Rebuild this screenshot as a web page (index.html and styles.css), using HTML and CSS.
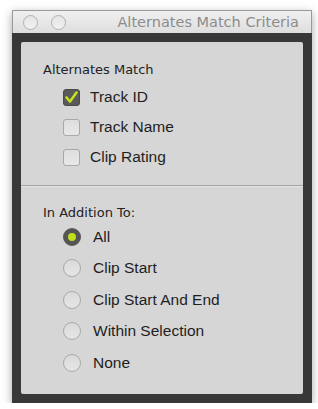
FILE: index.html
```html
<!DOCTYPE html>
<html lang="en">
<head>
    <meta charset="UTF-8">
    <title>Alternates Match Criteria</title>
    <link rel="stylesheet" href="styles.css">
</head>
<body>
    <div class="window">
        <div class="title-bar">
            <span class="light"></span>
            <span class="light"></span>
            <span class="title">Alternates Match Criteria</span>
        </div>
        <div class="frame">
            <div class="panel">
                <div class="section match-section">
                    <div class="section-title">Alternates Match</div>
                    <div class="option check-row">
                        <span class="checkbox checked">
                            <svg width="17" height="17" viewBox="0 0 17 17"><path d="M3.5 8.5 L7 12.5 L13.5 3.5" fill="none" stroke="#c6e21c" stroke-width="2.6" stroke-linecap="round" stroke-linejoin="round"/></svg>
                        </span>
                        <span class="label">Track ID</span>
                    </div>
                    <div class="option check-row">
                        <span class="checkbox"></span>
                        <span class="label">Track Name</span>
                    </div>
                    <div class="option check-row">
                        <span class="checkbox"></span>
                        <span class="label">Clip Rating</span>
                    </div>
                </div>
                <div class="section addition-section">
                    <div class="section-title">In Addition To:</div>
                    <div class="option radio-row">
                        <span class="radio selected"></span>
                        <span class="label">All</span>
                    </div>
                    <div class="option radio-row">
                        <span class="radio"></span>
                        <span class="label">Clip Start</span>
                    </div>
                    <div class="option radio-row">
                        <span class="radio"></span>
                        <span class="label">Clip Start And End</span>
                    </div>
                    <div class="option radio-row">
                        <span class="radio"></span>
                        <span class="label">Within Selection</span>
                    </div>
                    <div class="option radio-row">
                        <span class="radio"></span>
                        <span class="label">None</span>
                    </div>
                </div>
            </div>
        </div>
    </div>
</body>
</html>
```

FILE: styles.css
```css
body {
    margin: 0;
    padding: 10px 0 0 12px;
    background-color: #ffffff;
    font-family: 'Liberation Sans', Arial, sans-serif;
}

.window {
    width: 300px;
    box-shadow: 0 3px 9px rgba(0,0,0,0.35);
}

.title-bar {
    height: 22px;
    display: flex;
    align-items: center;
    padding: 0 12px 0 10px;
    background: linear-gradient(#f0f0f0, #dedede);
    border-top: 1px solid #9a9a9a;
    border-left: 1px solid #9a9a9a;
    border-right: 1px solid #9a9a9a;
}

.light {
    width: 13px;
    height: 13px;
    border-radius: 50%;
    border: 1px solid #b0b0b0;
    background: linear-gradient(#e4e4e4, #f2f2f2);
    margin-right: 13px;
}

.title {
    margin-left: auto;
    font-family: 'DejaVu Sans', sans-serif;
    font-size: 14.5px;
    color: #8c8c8c;
}

.frame {
    background-color: #383838;
    padding: 9px;
}

.panel {
    height: 352px;
    background-color: #d6d6d6;
    border-radius: 2px;
}

.section {
    padding-left: 22px;
}

.match-section {
    padding-top: 20px;
    padding-bottom: 13px;
    border-bottom: 1px solid #a4a4a4;
}

.addition-section {
    padding-top: 19px;
    box-shadow: inset 0 1px 0 #e4e4e4;
}

.section-title {
    font-family: 'DejaVu Sans', sans-serif;
    font-size: 13px;
    line-height: 16px;
    color: #222;
}

.match-section .section-title {
    margin-bottom: 4px;
}

.option {
    display: flex;
    align-items: center;
    padding-left: 20px;
    font-size: 15.5px;
    color: #1e1e1e;
}

.check-row {
    height: 30px;
}

.radio-row {
    height: 31.5px;
}

.checkbox {
    width: 17px;
    height: 17px;
    box-sizing: border-box;
    border: 1px solid #a8a8a8;
    border-radius: 3px;
    background: linear-gradient(#dedede, #e8e8e8);
    margin-right: 10px;
}

.checkbox.checked {
    background: #5a5a5a;
    border-color: #4a4a4a;
}

.checkbox svg {
    display: block;
    margin: -1px;
}

.radio {
    width: 18px;
    height: 18px;
    box-sizing: border-box;
    border: 1px solid #a8a8a8;
    border-radius: 50%;
    background: linear-gradient(#dadada, #e6e6e6);
    margin-right: 12px;
}

.radio.selected {
    border: 5px solid #555;
    background: #bfe01a;
}
```
